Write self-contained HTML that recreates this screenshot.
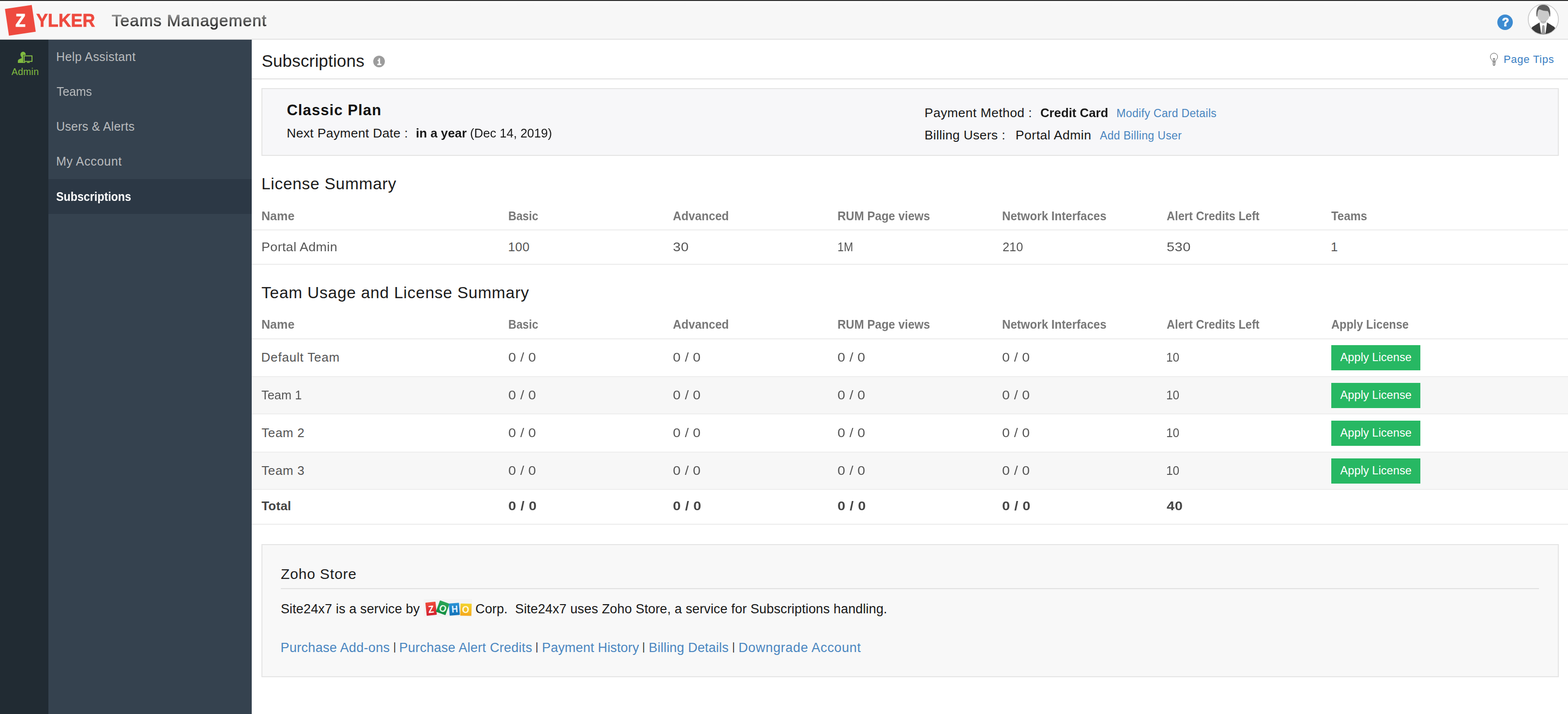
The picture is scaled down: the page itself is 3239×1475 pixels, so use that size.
<!DOCTYPE html>
<html lang="en">
<head>
<meta charset="utf-8">
<title>Teams Management - Subscriptions</title>
<style>
html,body{margin:0;padding:0;}
body{width:3239px;height:1475px;overflow:hidden;background:#fff;position:relative;font-family:"Liberation Sans",sans-serif;}
.b{position:absolute;box-sizing:border-box;}
.t{position:absolute;white-space:pre;line-height:1;font-family:"Liberation Sans",sans-serif;}
.btn{position:absolute;left:2750px;width:184px;height:52px;background:#27b863;}
svg{position:absolute;overflow:visible;}
</style>
</head>
<body>
<!-- chrome -->
<div class="b" style="left:0;top:0;width:3239px;height:2px;background:linear-gradient(#383838,#1f1f1f)"></div>
<div class="b" style="left:0;top:2px;width:3239px;height:78px;background:linear-gradient(#ffffff 0,#ffffff 1.4px,#f9f9f9 3px,#f7f7f7 12px)"></div>
<div class="b" style="left:0;top:80px;width:3239px;height:2px;background:#e3e3e3"></div>
<div class="b" style="left:0;top:82px;width:100px;height:1393px;background:#212b33"></div>
<div class="b" style="left:100px;top:82px;width:420px;height:1393px;background:#35424f"></div>
<div class="b" style="left:100px;top:370px;width:420px;height:72px;background:#2c3845"></div>

<!-- logo -->
<div class="b" style="left:14px;top:14px;width:55.6px;height:55.6px;background:#ee4a3f;transform:rotate(-8.5deg);"></div>
<span class="t" style="left:31.6px;top:24.2px;font-size:37.4px;font-weight:700;color:#fff;-webkit-text-stroke:1.2px #fff;transform:scaleX(0.9);transform-origin:0 0;">Z</span>

<!-- admin icon -->
<svg style="left:36px;top:106px" width="32" height="25" viewBox="36 106 32 25">
  <g fill="#80bb40">
    <ellipse cx="47.7" cy="112.9" rx="5.4" ry="6.2"/>
    <path d="M36.9 130 L36.9 125.5 Q37.2 123 40 122 L44.5 120.2 L45 117 L50.5 117 L51 120.2 L52 121 L52 130 Z"/>
    <path d="M56.3 127.5 L60.9 127.5 L61.6 130.1 L55.4 130.1 Z"/>
  </g>
  <rect x="48" y="113.6" width="19.6" height="14.6" fill="#212b33"/>
  <rect x="49.9" y="115.4" width="16.2" height="11.4" fill="none" stroke="#88c045" stroke-width="1.9"/>
</svg>

<!-- help -->
<div class="b" style="left:3093.2px;top:29.8px;width:32px;height:32px;border-radius:50%;background:#3d8bd1"></div>
<span class="t" style="left:3102.4px;top:34.2px;font-size:24px;font-weight:700;color:#fff;-webkit-text-stroke:0.9px #fff;">?</span>

<!-- avatar -->
<svg style="left:3156px;top:8px" width="64" height="64" viewBox="0 0 64 64">
  <defs><clipPath id="av"><circle cx="32" cy="32" r="30.6"/></clipPath></defs>
  <circle cx="32" cy="32" r="31.2" fill="#fff" stroke="#cbcbcb" stroke-width="1.8"/>
  <g clip-path="url(#av)">
    <path d="M6 64 L6.5 55 Q7 48 12 46 L24 38.5 L40 38.5 L52 46 Q57 48 57.5 55 L58 64 Z" fill="#3b3b3b"/>
    <path d="M24.3 38.6 L32 47 L39.7 38.6 L37 36 L27 36 Z" fill="#fff"/>
    <path d="M24.3 38.6 L27.5 62 L32 50 L36.5 62 L39.7 38.6 L32 46 Z" fill="#fff"/>
    <path d="M29.6 45.2 L32 43.6 L34.4 45.2 L35.6 62 L28.4 62 Z" fill="#9a9a9a"/>
    <path d="M26 30 L26 38 Q32 44 38 38 L38 30 Z" fill="#c4c4c4"/>
    <ellipse cx="32" cy="23.4" rx="12.4" ry="13.6" fill="#cacaca"/>
    <ellipse cx="32" cy="19" rx="12.9" ry="11" fill="#cacaca"/>
    <path d="M26.4 34.6 Q32 38.4 37.6 34.6 L37.6 36.2 Q32 40.6 26.4 36.2 Z" fill="#b2b2b2"/>
    <path d="M17.8 25 Q15.5 2 32 1.8 Q48.5 2 46.2 25 Q45.6 27.4 44.7 25.5 L44.4 23 Q43.2 16.4 40.6 14.6 Q32 15 24 11.2 Q20.4 12.6 19.9 21 L19.5 25.5 Q18.4 27.4 17.8 25 Z" fill="#5f5f5f"/>
  </g>
</svg>

<!-- title bar -->
<div class="b" style="left:520px;top:162px;width:2719px;height:2px;background:#e1e1e1"></div>
<div class="b" style="left:771.3px;top:115px;width:24px;height:24px;border-radius:50%;background:#9c9c9c"></div>
<span class="t" style="left:778.2px;top:119.6px;font-size:18px;font-weight:700;color:#fff;-webkit-text-stroke:0.9px #fff;font-family:'Liberation Mono',monospace;transform:scaleX(.82);transform-origin:50% 50%;">i</span>
<!-- bulb -->
<svg style="left:3076px;top:107px" width="22" height="31" viewBox="3076 107 22 31" fill="none" stroke="#555" stroke-width="1" stroke-linecap="round" stroke-linejoin="round">
  <path d="M3083.4 127.5 Q3082.8 124.6 3080.7 122.5 A7.5 7.5 0 1 1 3091.5 122.5 Q3089.4 124.6 3088.8 127.5 Z"/>
  <path d="M3084.3 120.9 L3087.9 120.9 M3084.7 121.1 L3085.4 127.2 M3087.5 121.1 L3086.8 127.2"/>
  <path d="M3083.4 130.2 L3089.2 128.7 M3083.4 132.5 L3089.2 131 M3084.2 134.5 L3088.8 133.2 M3084.6 134.7 L3086.2 135.6 L3087.8 134.9"/>
</svg>

<!-- plan box -->
<div class="b" style="left:540px;top:182px;width:2680px;height:140px;background:#f7f7f9;border:2px solid #e4e4e4"></div>

<!-- table 1 -->
<div class="b" style="left:520px;top:474px;width:2719px;height:2px;background:#ececec"></div>
<div class="b" style="left:520px;top:545px;width:2719px;height:2px;background:#ececec"></div>

<!-- table 2 -->
<div class="b" style="left:520px;top:699px;width:2719px;height:2px;background:#ececec"></div>
<div class="b" style="left:520px;top:777px;width:2719px;height:79px;background:#f7f7f7;border-top:2px solid #eeeeee;border-bottom:2px solid #eeeeee"></div>
<div class="b" style="left:520px;top:933px;width:2719px;height:79px;background:#f7f7f7;border-top:2px solid #eeeeee;border-bottom:2px solid #eeeeee"></div>
<div class="b" style="left:520px;top:1082px;width:2719px;height:2px;background:#ececec"></div>
<div class="btn" style="top:713px"></div>
<div class="btn" style="top:791px"></div>
<div class="btn" style="top:869px"></div>
<div class="btn" style="top:947px"></div>

<!-- zoho store -->
<div class="b" style="left:540px;top:1124px;width:2680px;height:275px;background:#f8f8f8;border:2px solid #e4e4e4"></div>
<div class="b" style="left:580px;top:1215px;width:2599px;height:2px;background:#e0e0e0"></div>
<!-- zoho logo -->
<div class="b" style="left:875px;top:1238px;width:100px;height:36px;background:#f3f3f3"></div>
<div class="b" style="left:879.5px;top:1243.5px;width:21px;height:27px;background:linear-gradient(#ef4a3a,#d3222f);transform:rotate(-6deg);border-radius:1px"></div>
<div class="b" style="left:904px;top:1243px;width:21px;height:25px;background:linear-gradient(#2aa555,#138f44);transform:rotate(20deg);border-radius:1px"></div>
<div class="b" style="left:928px;top:1245.5px;width:21px;height:25px;background:linear-gradient(#2b93d6,#1272b8);transform:rotate(-4deg);border-radius:1px"></div>
<div class="b" style="left:950.5px;top:1246.5px;width:23px;height:25px;background:linear-gradient(#f2d32e,#f5a81c);transform:rotate(2deg);border-radius:1px"></div>
<span class="t" style="left:884px;top:1248px;font-size:21px;font-weight:700;color:#fff;transform:rotate(-6deg) scaleX(.9);">Z</span>
<span class="t" style="left:906.5px;top:1246.5px;font-size:20px;font-weight:700;color:#e6fbe9;transform:rotate(20deg) scaleX(.95);">O</span>
<span class="t" style="left:931.5px;top:1248px;font-size:20px;font-weight:700;color:#e8f4ff;transform:rotate(-4deg) scaleX(.9);">H</span>
<span class="t" style="left:954px;top:1249px;font-size:20px;font-weight:700;color:#fffbe0;transform:rotate(2deg) scaleX(.95);">O</span>

<span class="t" style="left:74.7px;top:25.32px;font-size:36.6px;font-weight:700;color:#ee4a3f;transform:scaleX(0.9778);transform-origin:0 0;-webkit-text-stroke:0.8px #ee4a3f;">YLKER</span>
<span class="t" style="left:230.7px;top:25.64px;font-size:33.5px;font-weight:400;color:#444;letter-spacing:1.062px;padding:4px 0 8px;margin-top:-4px;background:linear-gradient(#929292 20%,#2a2a2a 72%);-webkit-background-clip:text;background-clip:text;color:transparent;-webkit-text-stroke:0.55px rgba(70,70,70,.55);">Teams Management</span>
<span class="t" style="left:23.7px;top:138.59px;font-size:19.5px;font-weight:400;color:#80bb40;letter-spacing:0.275px;">Admin</span>
<span class="t" style="left:116.0px;top:104.64px;font-size:25px;font-weight:400;color:#b9bbbd;letter-spacing:0.421px;">Help Assistant</span>
<span class="t" style="left:116.5px;top:176.84px;font-size:25px;font-weight:400;color:#b9bbbd;transform:scaleX(0.9910);transform-origin:0 0;">Teams</span>
<span class="t" style="left:116.0px;top:249.14px;font-size:25px;font-weight:400;color:#b9bbbd;letter-spacing:0.270px;">Users &amp; Alerts</span>
<span class="t" style="left:115.9px;top:321.44px;font-size:25px;font-weight:400;color:#b9bbbd;letter-spacing:0.671px;">My Account</span>
<span class="t" style="left:115.6px;top:393.64px;font-size:25px;font-weight:700;color:#fff;transform:scaleX(0.9294);transform-origin:0 0;">Subscriptions</span>
<span class="t" style="left:540.4px;top:107.67px;font-size:35px;font-weight:400;color:#1c1c1c;letter-spacing:0.179px;">Subscriptions</span>
<span class="t" style="left:3105.9px;top:111.78px;font-size:22px;font-weight:400;color:#3b7fc4;letter-spacing:0.749px;">Page Tips</span>
<span class="t" style="left:592.4px;top:212.46px;font-size:31px;font-weight:700;color:#111;letter-spacing:1.094px;">Classic Plan</span>
<span class="t" style="left:592.2px;top:261.97px;font-size:26.5px;font-weight:400;color:#181818;letter-spacing:0.325px;">Next Payment Date :</span>
<span class="t" style="left:858.9px;top:261.97px;font-size:26.5px;font-weight:700;color:#181818;transform:scaleX(0.9766);transform-origin:0 0;">in a year</span>
<span class="t" style="left:971.0px;top:261.97px;font-size:26.5px;font-weight:400;color:#181818;transform:scaleX(0.9662);transform-origin:0 0;">(Dec 14, 2019)</span>
<span class="t" style="left:1909.8px;top:219.57px;font-size:26.5px;font-weight:400;color:#181818;letter-spacing:0.458px;">Payment Method :</span>
<span class="t" style="left:2149.2px;top:219.57px;font-size:26.5px;font-weight:700;color:#181818;transform:scaleX(0.9718);transform-origin:0 0;">Credit Card</span>
<span class="t" style="left:2306.3px;top:223.03px;font-size:23px;font-weight:400;color:#4a86c0;letter-spacing:0.325px;">Modify Card Details</span>
<span class="t" style="left:1909.8px;top:265.87px;font-size:26.5px;font-weight:400;color:#181818;letter-spacing:0.336px;">Billing Users :</span>
<span class="t" style="left:2097.8px;top:265.87px;font-size:26.5px;font-weight:400;color:#181818;letter-spacing:0.535px;">Portal Admin</span>
<span class="t" style="left:2272.0px;top:269.03px;font-size:23px;font-weight:400;color:#4a86c0;letter-spacing:0.344px;">Add Billing User</span>
<span class="t" style="left:539.9px;top:362.94px;font-size:33.5px;font-weight:400;color:#1c1c1c;letter-spacing:0.726px;">License Summary</span>
<span class="t" style="left:540.1px;top:588.14px;font-size:33.5px;font-weight:400;color:#1c1c1c;letter-spacing:0.751px;">Team Usage and License Summary</span>
<span class="t" style="left:539.6px;top:432.57px;font-size:26.5px;font-weight:700;color:#787878;transform:scaleX(0.9469);transform-origin:0 0;">Name</span>
<span class="t" style="left:1049.8px;top:432.57px;font-size:26.5px;font-weight:700;color:#787878;transform:scaleX(0.8739);transform-origin:0 0;">Basic</span>
<span class="t" style="left:1390.0px;top:432.57px;font-size:26.5px;font-weight:700;color:#787878;transform:scaleX(0.9129);transform-origin:0 0;">Advanced</span>
<span class="t" style="left:1729.8px;top:432.57px;font-size:26.5px;font-weight:700;color:#787878;transform:scaleX(0.9077);transform-origin:0 0;">RUM Page views</span>
<span class="t" style="left:2070.0px;top:432.57px;font-size:26.5px;font-weight:700;color:#787878;transform:scaleX(0.9095);transform-origin:0 0;">Network Interfaces</span>
<span class="t" style="left:2410.0px;top:432.57px;font-size:26.5px;font-weight:700;color:#787878;transform:scaleX(0.8918);transform-origin:0 0;">Alert Credits Left</span>
<span class="t" style="left:2749.8px;top:432.57px;font-size:26.5px;font-weight:700;color:#787878;transform:scaleX(0.9041);transform-origin:0 0;">Teams</span>
<span class="t" style="left:539.6px;top:657.17px;font-size:26.5px;font-weight:700;color:#787878;transform:scaleX(0.9469);transform-origin:0 0;">Name</span>
<span class="t" style="left:1049.8px;top:657.17px;font-size:26.5px;font-weight:700;color:#787878;transform:scaleX(0.8739);transform-origin:0 0;">Basic</span>
<span class="t" style="left:1390.0px;top:657.17px;font-size:26.5px;font-weight:700;color:#787878;transform:scaleX(0.9129);transform-origin:0 0;">Advanced</span>
<span class="t" style="left:1729.8px;top:657.17px;font-size:26.5px;font-weight:700;color:#787878;transform:scaleX(0.9077);transform-origin:0 0;">RUM Page views</span>
<span class="t" style="left:2070.0px;top:657.17px;font-size:26.5px;font-weight:700;color:#787878;transform:scaleX(0.9095);transform-origin:0 0;">Network Interfaces</span>
<span class="t" style="left:2410.0px;top:657.17px;font-size:26.5px;font-weight:700;color:#787878;transform:scaleX(0.8918);transform-origin:0 0;">Alert Credits Left</span>
<span class="t" style="left:2750.0px;top:657.17px;font-size:26.5px;font-weight:700;color:#787878;transform:scaleX(0.8901);transform-origin:0 0;">Apply License</span>
<span class="t" style="left:539.6px;top:496.79px;font-size:26px;font-weight:400;color:#555;letter-spacing:0.400px;transform:scaleX(1.0316);transform-origin:0 0;">Portal Admin</span>
<span class="t" style="left:1049.5px;top:496.79px;font-size:26px;font-weight:400;color:#555;letter-spacing:0.400px;">100</span>
<span class="t" style="left:1389.5px;top:496.79px;font-size:26px;font-weight:400;color:#555;letter-spacing:0.400px;transform:scaleX(1.1025);transform-origin:0 0;">30</span>
<span class="t" style="left:1729.7px;top:496.79px;font-size:26px;font-weight:400;color:#555;transform:scaleX(0.8927);transform-origin:0 0;">1M</span>
<span class="t" style="left:2070.5px;top:496.79px;font-size:26px;font-weight:400;color:#555;transform:scaleX(0.9731);transform-origin:0 0;">210</span>
<span class="t" style="left:2409.6px;top:496.79px;font-size:26px;font-weight:400;color:#555;letter-spacing:0.400px;transform:scaleX(1.1150);transform-origin:0 0;">530</span>
<span class="t" style="left:2749.0px;top:496.79px;font-size:26px;font-weight:400;color:#555;">1</span>
<span class="t" style="left:539.5px;top:724.99px;font-size:26px;font-weight:400;color:#555;letter-spacing:0.822px;">Default Team</span>
<span class="t" style="left:1050.0px;top:724.99px;font-size:26px;font-weight:400;color:#555;letter-spacing:0.400px;transform:scaleX(1.0964);transform-origin:0 0;">0 / 0</span>
<span class="t" style="left:1389.5px;top:724.99px;font-size:26px;font-weight:400;color:#555;letter-spacing:0.400px;transform:scaleX(1.0964);transform-origin:0 0;">0 / 0</span>
<span class="t" style="left:1730.1px;top:724.99px;font-size:26px;font-weight:400;color:#555;letter-spacing:0.400px;transform:scaleX(1.0964);transform-origin:0 0;">0 / 0</span>
<span class="t" style="left:2070.3px;top:724.99px;font-size:26px;font-weight:400;color:#555;letter-spacing:0.400px;transform:scaleX(1.0964);transform-origin:0 0;">0 / 0</span>
<span class="t" style="left:2409.0px;top:724.99px;font-size:26px;font-weight:400;color:#555;transform:scaleX(0.9422);transform-origin:0 0;">10</span>
<span class="t" style="left:2768.6px;top:726.81px;font-size:23.5px;font-weight:400;color:#fff;letter-spacing:0.075px;">Apply License</span>
<span class="t" style="left:540.2px;top:803.09px;font-size:26px;font-weight:400;color:#555;transform:scaleX(0.9783);transform-origin:0 0;">Team 1</span>
<span class="t" style="left:1050.0px;top:803.09px;font-size:26px;font-weight:400;color:#555;letter-spacing:0.400px;transform:scaleX(1.0964);transform-origin:0 0;">0 / 0</span>
<span class="t" style="left:1389.5px;top:803.09px;font-size:26px;font-weight:400;color:#555;letter-spacing:0.400px;transform:scaleX(1.0964);transform-origin:0 0;">0 / 0</span>
<span class="t" style="left:1730.1px;top:803.09px;font-size:26px;font-weight:400;color:#555;letter-spacing:0.400px;transform:scaleX(1.0964);transform-origin:0 0;">0 / 0</span>
<span class="t" style="left:2070.3px;top:803.09px;font-size:26px;font-weight:400;color:#555;letter-spacing:0.400px;transform:scaleX(1.0964);transform-origin:0 0;">0 / 0</span>
<span class="t" style="left:2409.0px;top:803.09px;font-size:26px;font-weight:400;color:#555;transform:scaleX(0.9422);transform-origin:0 0;">10</span>
<span class="t" style="left:2768.6px;top:804.91px;font-size:23.5px;font-weight:400;color:#fff;letter-spacing:0.075px;">Apply License</span>
<span class="t" style="left:540.2px;top:881.19px;font-size:26px;font-weight:400;color:#555;letter-spacing:0.650px;">Team 2</span>
<span class="t" style="left:1050.0px;top:881.19px;font-size:26px;font-weight:400;color:#555;letter-spacing:0.400px;transform:scaleX(1.0964);transform-origin:0 0;">0 / 0</span>
<span class="t" style="left:1389.5px;top:881.19px;font-size:26px;font-weight:400;color:#555;letter-spacing:0.400px;transform:scaleX(1.0964);transform-origin:0 0;">0 / 0</span>
<span class="t" style="left:1730.1px;top:881.19px;font-size:26px;font-weight:400;color:#555;letter-spacing:0.400px;transform:scaleX(1.0964);transform-origin:0 0;">0 / 0</span>
<span class="t" style="left:2070.3px;top:881.19px;font-size:26px;font-weight:400;color:#555;letter-spacing:0.400px;transform:scaleX(1.0964);transform-origin:0 0;">0 / 0</span>
<span class="t" style="left:2409.0px;top:881.19px;font-size:26px;font-weight:400;color:#555;transform:scaleX(0.9422);transform-origin:0 0;">10</span>
<span class="t" style="left:2768.6px;top:883.01px;font-size:23.5px;font-weight:400;color:#fff;letter-spacing:0.075px;">Apply License</span>
<span class="t" style="left:540.2px;top:959.29px;font-size:26px;font-weight:400;color:#555;letter-spacing:0.650px;">Team 3</span>
<span class="t" style="left:1050.0px;top:959.29px;font-size:26px;font-weight:400;color:#555;letter-spacing:0.400px;transform:scaleX(1.0964);transform-origin:0 0;">0 / 0</span>
<span class="t" style="left:1389.5px;top:959.29px;font-size:26px;font-weight:400;color:#555;letter-spacing:0.400px;transform:scaleX(1.0964);transform-origin:0 0;">0 / 0</span>
<span class="t" style="left:1730.1px;top:959.29px;font-size:26px;font-weight:400;color:#555;letter-spacing:0.400px;transform:scaleX(1.0964);transform-origin:0 0;">0 / 0</span>
<span class="t" style="left:2070.3px;top:959.29px;font-size:26px;font-weight:400;color:#555;letter-spacing:0.400px;transform:scaleX(1.0964);transform-origin:0 0;">0 / 0</span>
<span class="t" style="left:2409.0px;top:959.29px;font-size:26px;font-weight:400;color:#555;transform:scaleX(0.9422);transform-origin:0 0;">10</span>
<span class="t" style="left:2768.6px;top:961.11px;font-size:23.5px;font-weight:400;color:#fff;letter-spacing:0.075px;">Apply License</span>
<span class="t" style="left:540.2px;top:1031.69px;font-size:26px;font-weight:700;color:#444;letter-spacing:0.233px;">Total</span>
<span class="t" style="left:1050.0px;top:1031.69px;font-size:26px;font-weight:700;color:#464646;letter-spacing:0.400px;transform:scaleX(1.1175);transform-origin:0 0;">0 / 0</span>
<span class="t" style="left:1389.5px;top:1031.69px;font-size:26px;font-weight:700;color:#464646;letter-spacing:0.400px;transform:scaleX(1.1175);transform-origin:0 0;">0 / 0</span>
<span class="t" style="left:1730.1px;top:1031.69px;font-size:26px;font-weight:700;color:#464646;letter-spacing:0.400px;transform:scaleX(1.1175);transform-origin:0 0;">0 / 0</span>
<span class="t" style="left:2070.3px;top:1031.69px;font-size:26px;font-weight:700;color:#464646;letter-spacing:0.400px;transform:scaleX(1.1175);transform-origin:0 0;">0 / 0</span>
<span class="t" style="left:2409.8px;top:1031.69px;font-size:26px;font-weight:700;color:#464646;letter-spacing:0.400px;transform:scaleX(1.1200);transform-origin:0 0;">40</span>
<span class="t" style="left:580.0px;top:1170.51px;font-size:30px;font-weight:400;color:#1c1c1c;letter-spacing:0.832px;">Zoho Store</span>
<span class="t" style="left:579.9px;top:1244.64px;font-size:27px;font-weight:400;color:#181818;letter-spacing:0.147px;">Site24x7 is a service by</span>
<span class="t" style="left:982.0px;top:1244.64px;font-size:27px;font-weight:400;color:#181818;letter-spacing:0.147px;">Corp.  Site24x7 uses Zoho Store, a service for Subscriptions handling.</span>
<span class="t" style="left:579.6px;top:1324.94px;font-size:27px;font-weight:400;color:#4a86c0;letter-spacing:0.315px;">Purchase Add-ons</span>
<span class="t" style="left:812.6px;top:1325.57px;font-size:21.3px;font-weight:400;color:#2a2a2a;">|</span>
<span class="t" style="left:824.5px;top:1324.94px;font-size:27px;font-weight:400;color:#4a86c0;letter-spacing:0.288px;">Purchase Alert Credits</span>
<span class="t" style="left:1106.2px;top:1325.57px;font-size:21.3px;font-weight:400;color:#2a2a2a;">|</span>
<span class="t" style="left:1119.6px;top:1324.94px;font-size:27px;font-weight:400;color:#4a86c0;letter-spacing:0.165px;">Payment History</span>
<span class="t" style="left:1326.7px;top:1325.57px;font-size:21.3px;font-weight:400;color:#2a2a2a;">|</span>
<span class="t" style="left:1340.1px;top:1324.94px;font-size:27px;font-weight:400;color:#4a86c0;letter-spacing:0.197px;">Billing Details</span>
<span class="t" style="left:1512.4px;top:1325.57px;font-size:21.3px;font-weight:400;color:#2a2a2a;">|</span>
<span class="t" style="left:1525.4px;top:1324.94px;font-size:27px;font-weight:400;color:#4a86c0;letter-spacing:0.680px;">Downgrade Account</span>
</body>
</html>
